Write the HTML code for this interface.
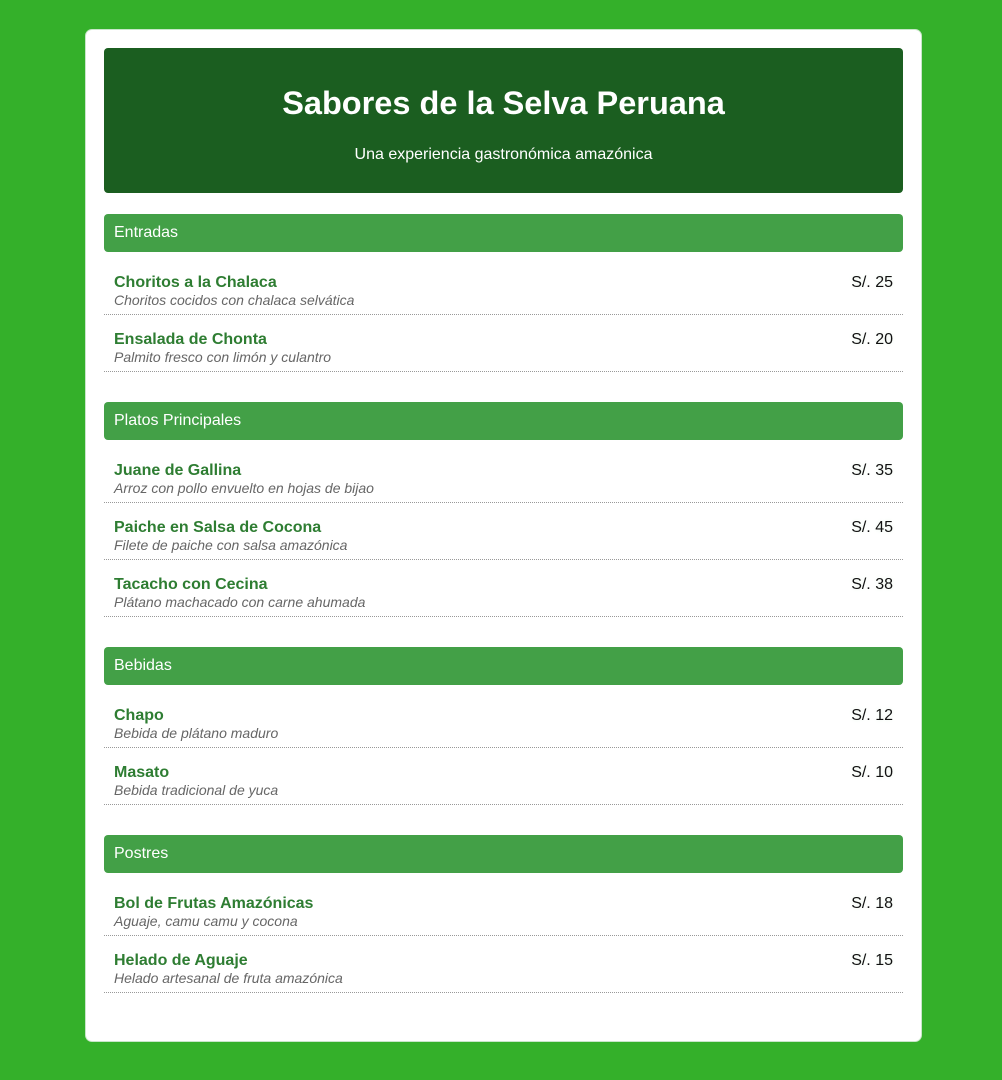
<!DOCTYPE html>
<html><head><meta charset="utf-8"><style>
*{box-sizing:border-box;margin:0;padding:0}
body{background:#34b02a;font-family:"Liberation Sans",Arial,sans-serif;width:1002px;height:1080px;overflow:hidden}
.c{position:absolute;left:85px;top:29px;width:837px;height:1013px;background:#fff;border:1px solid #c8e6c9;border-radius:7px;padding:18px}
.h{background:#1b5e20;border-radius:4px;height:145px;text-align:center;color:#fff}
.h h1{font-size:32.5px;font-weight:bold;padding-top:37px;line-height:37px}
.h p{font-size:16px;margin-top:24px;line-height:18px}
.s{margin-top:30px}
.s.f{margin-top:21px}
.sh{background:#43a047;color:#fff;border-radius:4px;height:38px;line-height:38px;padding-left:10px;font-size:16px;margin-bottom:10px}
.i{display:flex;justify-content:space-between;padding:11px 10px 5px;border-bottom:1px dotted #999;margin-bottom:4px;height:53px}
.n{color:#2e7d32;font-weight:bold;font-size:16px;line-height:19px}
.d{color:#666;font-style:italic;font-size:14px;line-height:17px}
.p{font-size:16px;line-height:19px;color:#111;text-shadow:0 0 4px #e8f5e9}
</style></head><body><div class="c">
<div class="h"><h1>Sabores de la Selva Peruana</h1><p>Una experiencia gastronómica amazónica</p></div>
<div class="s f"><div class="sh">Entradas</div>
<div class="i"><div><div class="n">Choritos a la Chalaca</div><div class="d">Choritos cocidos con chalaca selvática</div></div><div class="p">S/. 25</div></div>
<div class="i"><div><div class="n">Ensalada de Chonta</div><div class="d">Palmito fresco con limón y culantro</div></div><div class="p">S/. 20</div></div>
</div>
<div class="s"><div class="sh">Platos Principales</div>
<div class="i"><div><div class="n">Juane de Gallina</div><div class="d">Arroz con pollo envuelto en hojas de bijao</div></div><div class="p">S/. 35</div></div>
<div class="i"><div><div class="n">Paiche en Salsa de Cocona</div><div class="d">Filete de paiche con salsa amazónica</div></div><div class="p">S/. 45</div></div>
<div class="i"><div><div class="n">Tacacho con Cecina</div><div class="d">Plátano machacado con carne ahumada</div></div><div class="p">S/. 38</div></div>
</div>
<div class="s"><div class="sh">Bebidas</div>
<div class="i"><div><div class="n">Chapo</div><div class="d">Bebida de plátano maduro</div></div><div class="p">S/. 12</div></div>
<div class="i"><div><div class="n">Masato</div><div class="d">Bebida tradicional de yuca</div></div><div class="p">S/. 10</div></div>
</div>
<div class="s"><div class="sh">Postres</div>
<div class="i"><div><div class="n">Bol de Frutas Amazónicas</div><div class="d">Aguaje, camu camu y cocona</div></div><div class="p">S/. 18</div></div>
<div class="i"><div><div class="n">Helado de Aguaje</div><div class="d">Helado artesanal de fruta amazónica</div></div><div class="p">S/. 15</div></div>
</div>
</div></body></html>
